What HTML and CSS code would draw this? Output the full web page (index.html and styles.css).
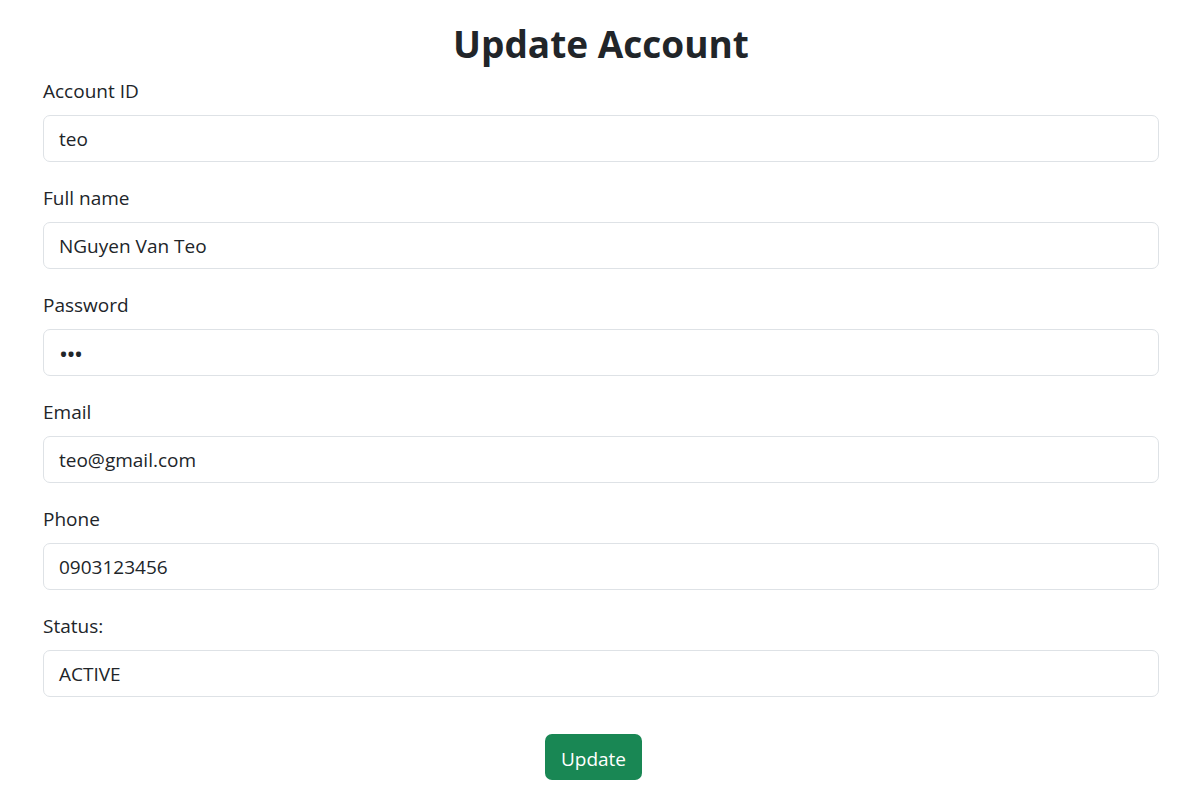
FILE: index.html
```html
<!DOCTYPE html>
<html>
<head>
<meta charset="utf-8">
<link rel="stylesheet" href="styles.css">
</head>
<body>
<div class="form-wrap">
  <h1 class="title">Update Account</h1>
  <div class="group">
    <label class="lbl">Account ID</label>
    <div class="field">teo</div>
  </div>
  <div class="group">
    <label class="lbl">Full name</label>
    <div class="field">NGuyen Van Teo</div>
  </div>
  <div class="group">
    <label class="lbl">Password</label>
    <div class="field pw">•••</div>
  </div>
  <div class="group">
    <label class="lbl">Email</label>
    <div class="field">teo@gmail.com</div>
  </div>
  <div class="group">
    <label class="lbl">Phone</label>
    <div class="field">0903123456</div>
  </div>
  <div class="group">
    <label class="lbl">Status:</label>
    <div class="field">ACTIVE</div>
  </div>
</div>
<div class="actions">
  <button class="btn">Update</button>
</div>
</body>
</html>
```
FILE: styles.css
```css
html, body {
  margin: 0;
  padding: 0;
  background: #fff;
}
body {
  font-family: "Open Sans", "Noto Sans", sans-serif;
  color: #212529;
}
.form-wrap {
  width: 1116px;
  margin-left: 43px;
}
.title {
  margin: 20px 0 0;
  height: 56px;
  font-size: 37px;
  line-height: 48px;
  font-weight: 700;
  text-align: center;
}
.group {
  display: flex;
  flex-direction: column;
}
.group + .group {
  margin-top: 21px;
}
.lbl {
  font-size: 19px;
  line-height: 30px;
  height: 30px;
  margin-bottom: 9px;
}
.field {
  box-sizing: border-box;
  height: 47px;
  border: 1px solid #dee2e6;
  border-radius: 7px;
  padding: 1px 15px 0;
  font-size: 19px;
  line-height: 45px;
}
.pw {
  font-size: 24px;
  letter-spacing: -1.5px;
}
.actions {
  display: flex;
  justify-content: center;
  margin-top: 37px;
  padding-left: 2px;
}
.btn {
  box-sizing: border-box;
  height: 46px;
  width: 97px;
  border: none;
  border-radius: 7px;
  background: #198754;
  color: #fff;
  font-family: inherit;
  font-size: 19px;
  padding: 3px 0 0;
}
```
